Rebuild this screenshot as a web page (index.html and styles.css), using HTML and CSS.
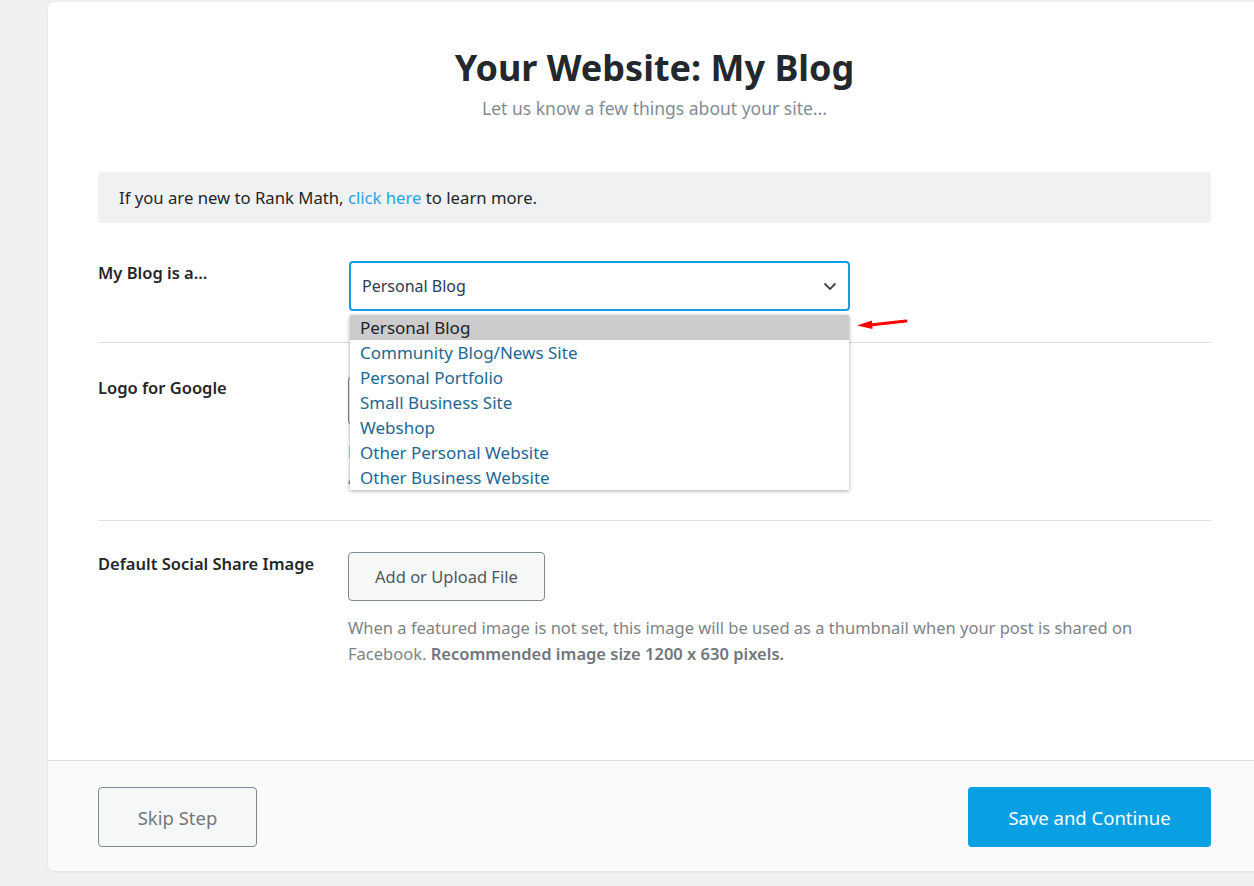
FILE: index.html
```html
<!DOCTYPE html>
<html>
	<head>
		<title>Setup Wizard - Your Site</title>
		<link rel="stylesheet" href="styles.css">
	</head>

	<body>
		<div class="wizard">

			<div class="wizard-body">
				<h1 class="heading">Your Website: My Blog</h1>
				<p class="subheading">Let us know a few things about your site...</p>

				<div class="notice">
					If you are new to Rank Math, <a href="#" class="link">click here</a> to learn more.
				</div>

				<div class="row first">
					<div class="label">My Blog is a...</div>
					<div class="field">
						<div class="select-wrap">
							<div class="select">
								<span>Personal Blog</span>
								<svg class="chevron" width="14" height="9" viewBox="0 0 14 9">
									<path d="M1.5 1.5 L7 7 L12.5 1.5" fill="none" stroke="#3c434a" stroke-width="1.8"/>
								</svg>
							</div>

							<ul class="options">
								<li class="option selected">Personal Blog</li>
								<li class="option">Community Blog/News Site</li>
								<li class="option">Personal Portfolio</li>
								<li class="option">Small Business Site</li>
								<li class="option">Webshop</li>
								<li class="option">Other Personal Website</li>
								<li class="option">Other Business Website</li>
							</ul>

							<svg class="pointer" width="52" height="14" viewBox="0 0 52 14">
								<path d="M50 4 L14 8" stroke="#f00" stroke-width="3" stroke-linecap="round"/>
								<path d="M1 8.5 L16 3.5 L16.5 12 Z" fill="#f00"/>
							</svg>
						</div>
					</div>
				</div>

				<div class="row logo-row">
					<div class="label">Logo for Google</div>
					<div class="field">
						<button class="btn-upload">Add or Upload File</button>
						<p class="help narrow">Min Size: 160X90px, Max Size: 1920X1080px.<br>A squared image is preferred by the search engines.</p>
					</div>
				</div>

				<div class="row last">
					<div class="label">Default Social Share Image</div>
					<div class="field">
						<button class="btn-upload">Add or Upload File</button>
						<p class="help">When a featured image is not set, this image will be used as a thumbnail when your post is shared on Facebook. <strong>Recommended image size 1200 x 630 pixels.</strong></p>
					</div>
				</div>
			</div>

			<div class="wizard-footer">
				<button class="btn-skip">Skip Step</button>
				<button class="btn-save">Save and Continue</button>
			</div>

		</div>
	</body>
</html>
```

FILE: styles.css
```css
html, body {
	margin: 0;
	padding: 0;
	overflow: hidden;
}

body {
	background-color: #f0f0f1;
	font-family: "Noto Sans", "Open Sans", sans-serif;
	color: #242628;
	width: 1254px;
	height: 886px;
}

.wizard {
	width: 1213px;
	margin: 2px 0 0 48px;
	background-color: #fff;
	border-radius: 6px;
	box-shadow: 0 1px 3px rgba(0, 0, 0, 0.08);
	overflow: hidden;
}

.wizard-body {
	padding: 42px 50px 62px 50px;
}

.heading {
	margin: 0;
	text-align: center;
	font-size: 36px;
	font-weight: 700;
	line-height: 48px;
	color: #23282d;
}

.subheading {
	margin: 4px 0 0 0;
	text-align: center;
	font-size: 17.5px;
	line-height: 24px;
	color: #838b94;
}

.notice {
	margin-top: 52px;
	background-color: #f0f1f3;
	border-radius: 4px;
	padding: 13px 21px;
	font-size: 16.7px;
	line-height: 25px;
}

.link {
	color: #2ea2e3;
	text-decoration: none;
}

.row {
	display: grid;
	grid-template-columns: 250px 1fr;
	padding: 33px 0 31px 0;
	border-bottom: 1px solid #dde1e6;
}

.row.first {
	padding-top: 38px;
}

.row.logo-row {
	padding-bottom: 29px;
}

.row.last {
	padding-top: 31px;
	border-bottom: none;
}

.label {
	font-size: 16.5px;
	font-weight: 600;
	line-height: 24px;
	color: #242628;
}

.select-wrap {
	position: relative;
	width: 502px;
}

.select {
	box-sizing: border-box;
	display: flex;
	align-items: center;
	justify-content: space-between;
	height: 50px;
	border: 2px solid #0f9fe2;
	border-radius: 4px;
	padding: 0 11px 0 11px;
	font-size: 16px;
	color: #2b3d4e;
	margin-left: 1px;
}

.options {
	position: absolute;
	left: 2px;
	top: 54px;
	width: 499px;
	margin: 0;
	padding: 0;
	list-style: none;
	background-color: #fff;
	box-shadow: 0 1px 4px rgba(0, 0, 0, 0.35);
	z-index: 2;
}

.option {
	height: 25px;
	line-height: 25px;
	padding-left: 10px;
	font-size: 17px;
	color: #1e6794;
}

.option.selected {
	background-color: #cccccc;
	color: #202225;
}

.pointer {
	position: absolute;
	left: 508px;
	top: 56px;
}

.btn-upload {
	font-family: inherit;
	font-size: 16.5px;
	color: #50575e;
	background-color: #f6f7f7;
	border: 1px solid #7e8993;
	border-radius: 4px;
	height: 49px;
	padding: 0 26px;
	cursor: pointer;
}

.help {
	margin: 14px 0 0 0;
	max-width: 800px;
	font-size: 16.5px;
	line-height: 26px;
	color: #7e8387;
}

.help.narrow {
	max-width: 480px;
}

.help strong {
	font-weight: 600;
	color: #70767b;
}

.wizard-footer {
	display: flex;
	justify-content: space-between;
	align-items: center;
	background-color: #fafafa;
	border-top: 1px solid #dde1e6;
	padding: 26px 50px 24px 50px;
}

.btn-skip {
	font-family: inherit;
	font-size: 18.5px;
	color: #72777c;
	background-color: #f6f7f7;
	border: 1px solid #7e8993;
	border-radius: 4px;
	width: 159px;
	height: 60px;
	cursor: pointer;
}

.btn-save {
	font-family: inherit;
	font-size: 18.5px;
	color: #fff;
	background-color: #08a0e2;
	border: none;
	border-radius: 4px;
	width: 243px;
	height: 60px;
	cursor: pointer;
}
```
